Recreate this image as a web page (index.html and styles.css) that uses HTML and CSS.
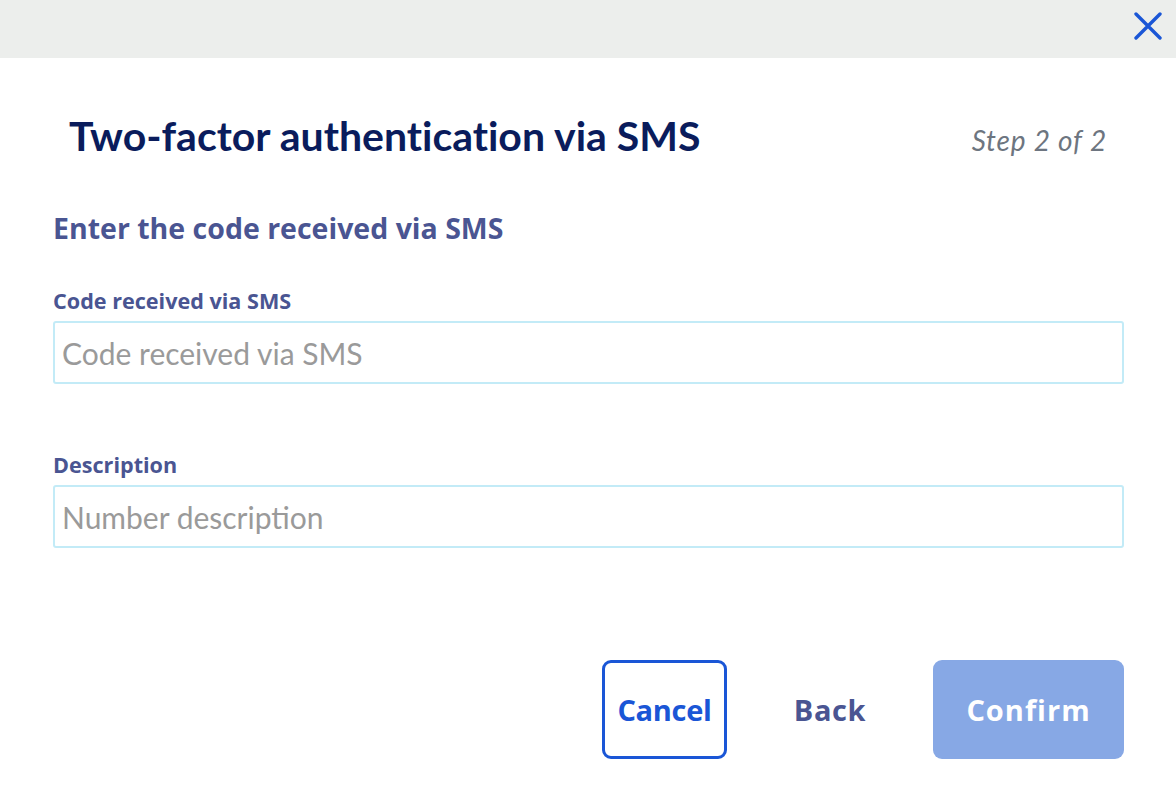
FILE: index.html
```html
<!DOCTYPE html>
<html lang="en">
<head>
<meta charset="utf-8">
<title>Two-factor authentication via SMS</title>
<link rel="stylesheet" href="styles.css">
</head>
<body>
<div class="modal">
  <div class="topbar">
    <button class="close" aria-label="Close">
      <svg width="28" height="28" viewBox="0 0 28 28"><path d="M2 2 L26 26 M26 2 L2 26" stroke="#1a56d6" stroke-width="3.4" stroke-linecap="round" fill="none"/></svg>
    </button>
  </div>
  <div class="content">
    <div class="title-row">
      <h1 class="title">Two-factor authentication via SMS</h1>
      <span class="step">Step 2 of 2</span>
    </div>
    <h2 class="subtitle">Enter the code received via SMS</h2>
    <div class="field">
      <label class="label" for="code">Code received via SMS</label>
      <input class="input" id="code" type="text" placeholder="Code received via SMS">
    </div>
    <div class="field field-second">
      <label class="label" for="desc">Description</label>
      <input class="input" id="desc" type="text" placeholder="Number description">
    </div>
    <div class="actions">
      <button class="btn btn-cancel">Cancel</button>
      <button class="btn btn-back">Back</button>
      <button class="btn btn-confirm">Confirm</button>
    </div>
  </div>
</div>
</body>
</html>
```
FILE: styles.css
```css
* { box-sizing: border-box; }
html, body { margin: 0; padding: 0; background: #ffffff; }
body { font-family: "Open Sans", "Liberation Sans", sans-serif; font-variant-ligatures: none; }

.modal { width: 1176px; height: 802px; background: #fff; }

.topbar {
  height: 58px;
  background: #eceeec;
  display: flex;
  justify-content: flex-end;
  align-items: center;
  padding-right: 14px;
}
.close {
  border: 0; background: transparent; padding: 0;
  width: 28px; height: 28px;
  display: flex; align-items: center; justify-content: center;
  margin-top: -6px;
}

.content { padding: 0 52px 0 53px; }

.title-row {
  display: flex;
  justify-content: space-between;
  align-items: center;
  padding: 0 17px 0 16px;
  margin-top: 53px;
  height: 50px;
}
.title {
  margin: 0;
  font-family: "Lato", "Open Sans", sans-serif;
  font-variant-ligatures: none;
  font-size: 41px;
  line-height: 50px;
  font-weight: 700;
  color: #0a1c5c;
}
.step {
  font-family: "Lato", "Open Sans", sans-serif;
  font-size: 28px;
  letter-spacing: 0.8px;
  font-style: italic;
  color: #6d7580;
  margin-top: 7px;
}

.subtitle {
  margin: 51px 0 0;
  font-size: 28.5px;
  font-weight: 700;
  color: #4a5592;
  line-height: 32px;
}

.field { margin-top: 45px; display: flex; flex-direction: column; }
.field-second { margin-top: 69px; }
.label {
  font-size: 21.6px;
  font-weight: 700;
  color: #4a5592;
  line-height: 24px;
  margin-bottom: 8px;
}
.input {
  height: 63px;
  border: 2px solid #c3ebf7;
  border-radius: 3px;
  padding: 0 7px;
  font-family: "Lato", "Open Sans", sans-serif;
  font-size: 30px;
  color: #333;
  outline: none;
}
.input::placeholder { color: #9a9a9a; }

.actions {
  display: flex;
  justify-content: flex-end;
  align-items: center;
  margin-top: 112px;
}
.btn {
  font-family: "Open Sans", "Liberation Sans", sans-serif;
  font-size: 29px;
  font-weight: 700;
  height: 99px;
  border-radius: 9px;
  cursor: pointer;
  padding: 0;
}
.btn-cancel {
  width: 125px;
  border: 3px solid #1a56d6;
  background: #fff;
  color: #1a56d6;
  letter-spacing: -0.3px;
}
.btn-back {
  border: 0;
  background: transparent;
  color: #4a5592;
  width: 206px;
  letter-spacing: 0.6px;
}
.btn-confirm {
  width: 191px;
  border: 0;
  background: #87a8e5;
  color: #fff;
  letter-spacing: 1px;
}
```
